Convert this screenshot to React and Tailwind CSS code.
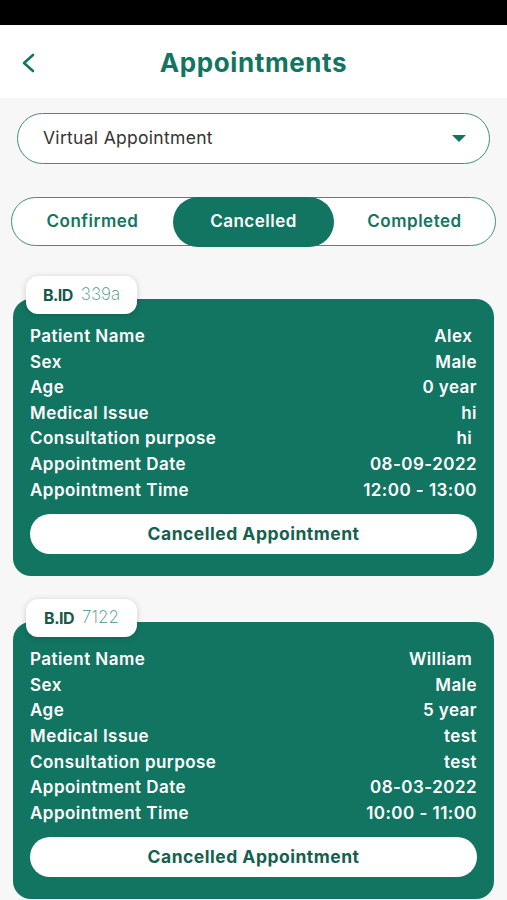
import React, { useState } from 'react';

const green = '#127561';

const appointments = [
  {
    bid: '339a',
    rows: [
      ['Patient Name', 'Alex '],
      ['Sex', 'Male'],
      ['Age', '0 year'],
      ['Medical Issue', 'hi'],
      ['Consultation purpose', 'hi '],
      ['Appointment Date', '08-09-2022'],
      ['Appointment Time', '12:00 - 13:00'],
    ],
  },
  {
    bid: '7122',
    rows: [
      ['Patient Name', 'William '],
      ['Sex', 'Male'],
      ['Age', '5 year'],
      ['Medical Issue', 'test'],
      ['Consultation purpose', 'test'],
      ['Appointment Date', '08-03-2022'],
      ['Appointment Time', '10:00 - 11:00'],
    ],
  },
];

export default function App() {
  const [tab, setTab] = useState('Cancelled');

  return (
    <div className="w-[507px] h-[900px] overflow-hidden bg-[#f7f7f8] flex flex-col" style={{ fontFamily: 'Inter, "Open Sans", sans-serif' }}>
      <div className="h-[25px] bg-black shrink-0" />

      {/* header */}
      <div className="h-[73px] bg-white flex items-center px-5 shrink-0">
        <button className="w-[20px] flex items-center text-[#127561] mt-[2px]">
          <svg width="16" height="20" viewBox="0 0 16 20" fill="none" stroke="currentColor" strokeWidth="2.6" strokeLinecap="round" strokeLinejoin="round">
            <path d="M13 2 L4 10 L13 18" />
          </svg>
        </button>
        <h1 className="flex-1 text-center text-[26px] font-bold tracking-[0.6px] text-[#127561] pr-5 mt-[2px]">Appointments</h1>
      </div>

      <div className="px-[11px] pt-[15px]">
        {/* dropdown */}
        <div className="mx-[6px] h-[51px] rounded-full border-[1.5px] border-[#3f8f7c] bg-white flex items-center justify-between pl-[25px] pr-[23px]">
          <span className="text-[17.5px] tracking-[0.3px] text-[#333]">Virtual Appointment</span>
          <svg width="14" height="8" viewBox="0 0 14 8"><path d="M0 0 H14 L7 7 Z" fill={green} /></svg>
        </div>

        {/* tabs */}
        <div className="mt-[33px] h-[49px] rounded-full border-[1.5px] border-[#3f8f7c] bg-white grid grid-cols-3">
          {['Confirmed', 'Cancelled', 'Completed'].map(t => (
            <button
              key={t}
              onClick={() => setTab(t)}
              className={`rounded-full text-[17px] tracking-[0.5px] font-semibold -my-[1.5px] ${tab === t ? 'bg-[#127561] text-white' : 'text-[#127561]'}`}
            >
              {t}
            </button>
          ))}
        </div>
      </div>

      <div className="px-[13px] pt-[30px] flex flex-col gap-[23px]">
        {appointments.map(a => (
          <div key={a.bid} className="flex flex-col">
            <div className="relative z-10 ml-[13px] w-[111px] h-[38px] rounded-[12px] bg-white shadow-[0_1px_6px_rgba(0,0,0,0.18)] flex items-center justify-center gap-[8px]">
              <span className="text-[16px] font-bold text-[#16584a] tracking-[-0.5px]">B.ID</span>
              <span className="text-[17px] font-extralight text-[#3f9580]">{a.bid}</span>
            </div>
            <div className="-mt-[15px] rounded-[18px] bg-[#127561] px-[17px] pt-[25px] pb-[22px]">
              {a.rows.map(([k, v]) => (
                <div key={k} className="flex justify-between items-center h-[25.6px] text-white text-[17px] tracking-[0.45px] font-semibold">
                  <span>{k}</span>
                  <span className="whitespace-pre">{v}</span>
                </div>
              ))}
              <button className="mt-[11px] w-full h-[40px] rounded-full bg-white text-[#16604f] text-[17.5px] tracking-[0.5px] font-bold">
                Cancelled Appointment
              </button>
            </div>
          </div>
        ))}
      </div>
    </div>
  );
}
